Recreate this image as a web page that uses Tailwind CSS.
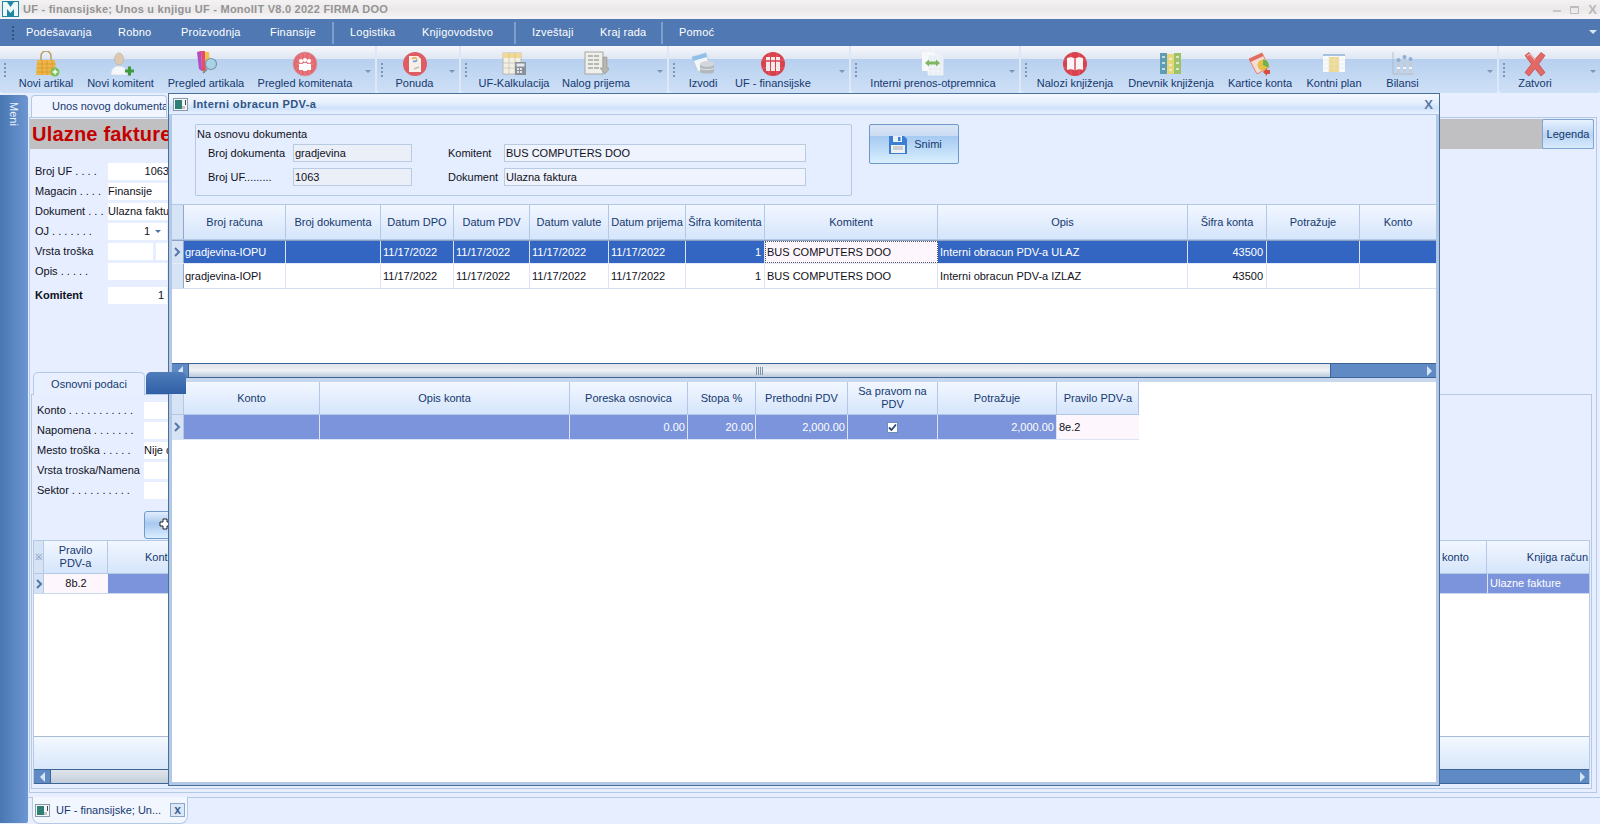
<!DOCTYPE html>
<html><head><meta charset="utf-8"><title>UF - finansijske</title>
<script src="https://cdn.jsdelivr.net/npm/@tailwindcss/browser@4"></script></head>
<body class="m-0 overflow-hidden">
<div class="relative w-[1600px] h-[824px] flex flex-col overflow-hidden bg-[#e6eeff] font-[Liberation_Sans,sans-serif] text-[11px] text-[#10101a]">

<!-- title bar -->
<div class="h-[19px] shrink-0 flex items-center bg-gradient-to-b from-[#f4f2f2] via-[#ece9ea] to-[#f6f5f6]">
  <svg width="17" height="16" viewBox="0 0 17 16" class="ml-[2px] mb-[2px]"><rect width="17" height="16" fill="#1e88a0"/><path d="M1 1h4l3.500 5 3.500-5h4v14h-4V8l-3.500 4L5 8v7H1z" fill="#eef8fa"/></svg>
  <span class="ml-[4px] font-bold text-[11px] tracking-[0.25px] text-[#949494] whitespace-nowrap">UF - finansijske; Unos u knjigu UF - MonolIT V8.0 2022 FIRMA DOO</span>
  <div class="ml-auto mr-[3px] flex items-center gap-[9px] text-[#b8b8b8]">
    <span class="w-[8px] h-[2px] mt-[3px] bg-[#c8c8c8]"></span>
    <span class="w-[9px] h-[8px] border border-[#bdbdbd] border-t-2"></span>
    <span class="font-bold text-[13px] leading-none">X</span>
  </div>
</div>

<!-- menu bar -->
<div class="h-[27px] shrink-0 bg-[#5079b3] flex items-center text-white text-[11px] tracking-[0.2px] relative">
  <div class="w-[26px] flex justify-center"><span class="w-[2px] h-[14px] border-l-2 border-dotted border-[#33527f]"></span></div>
  <span class="w-[92px]">Podešavanja</span>
  <span class="w-[63px]">Robno</span>
  <span class="w-[89px]">Proizvodnja</span>
  <span class="w-[62px]">Finansije</span>
  <span class="w-[2px] h-[22px] bg-[#7d9fce] mr-[16px]"></span>
  <span class="w-[72px]">Logistika</span>
  <span class="w-[92px]">Knjigovodstvo</span>
  <span class="w-[2px] h-[22px] bg-[#7d9fce] mr-[16px]"></span>
  <span class="w-[68px]">Izveštaji</span>
  <span class="w-[61px]">Kraj rada</span>
  <span class="w-[2px] h-[22px] bg-[#7d9fce] mr-[16px]"></span>
  <span>Pomoć</span>
  <span class="absolute right-[3px] top-[11px] w-0 h-0 border-x-[4px] border-x-transparent border-t-[4px] border-t-[#dbe6f5]"></span>
</div>

<!-- toolbar -->
<div class="h-[47px] shrink-0 flex text-[#15386e] leading-[13px] bg-[#e6eeff]">
  <!-- group 1 -->
  <div class="w-[377px] h-[47px] relative flex pl-[15px] rounded-b-[3px] border-r-2 border-[#dce8f8] bg-[linear-gradient(#f6f7fa_0%,#dfe7f3_27%,#b7d0ef_28%,#cee0f6_100%)]">
    <span class="absolute left-[4px] top-[17px] h-[14px] border-l-2 border-dotted border-[#7f95b3]"></span>
    <div class="w-[62px] flex flex-col items-center"><svg width="28" height="26" viewBox="0 0 28 26" class="mt-[5px]"><path d="M9 9V5a5 5 0 0 1 10 0v4" fill="none" stroke="#b89a5e" stroke-width="1.4"/><path d="M5 9h18l1 15H4z" fill="#eeb548"/><path d="M5 13h19M5 17h19M5 21h19M10 9v15M15 9v15M20 9v15" stroke="#d4952c" stroke-width=".7"/><circle cx="23" cy="21" r="4.5" fill="#7cc05a"/><path d="M23 18.500v5M20.500 21h5" stroke="#fff" stroke-width="1.4"/></svg><span class="whitespace-nowrap">Novi artikal</span></div>
    <div class="w-[87px] flex flex-col items-center"><svg width="28" height="26" viewBox="0 0 28 26" class="mt-[5px]"><ellipse cx="12" cy="8" rx="4.500" ry="6" fill="#dcc9b0" stroke="#b5a893" stroke-width=".5"/><path d="M4 24c0-6 3-9 8-9s8 3 8 9z" fill="#f4f6fa" stroke="#cfd6e0" stroke-width=".6"/><path d="M18 20h9M22.500 15.500v9" stroke="#3e9a3c" stroke-width="3"/></svg><span class="whitespace-nowrap">Novi komitent</span></div>
    <div class="w-[84px] flex flex-col items-center"><svg width="28" height="26" viewBox="0 0 28 26" class="mt-[3px]"><path d="M5 3l4-1 1 20-3-2z" fill="#b24bc9"/><path d="M9 2h4l1 20h-4z" fill="#e74d63"/><path d="M13 3h4l1 14h-4z" fill="#f3c04b"/><circle cx="19" cy="15" r="5.500" fill="#a8d3e6" stroke="#7b95a8" stroke-width="1.200"/><path d="M15 20l-4 4" stroke="#8d8d8d" stroke-width="2"/></svg><span class="mt-[2px] whitespace-nowrap">Pregled artikala</span></div>
    <div class="w-[114px] flex flex-col items-center"><svg width="26" height="26" viewBox="0 0 26 26" class="mt-[5px]"><circle cx="13" cy="13" r="12" fill="#e26b73"/><circle cx="13" cy="13" r="12" fill="none" stroke="#d9a2a5" stroke-width=".7"/><path d="M5 9h16M4 13h18M5 17h16M9 3v20M13 2v22M17 3v20" stroke="#ee9a9f" stroke-width=".6"/><circle cx="9" cy="10" r="2" fill="#fff"/><circle cx="17" cy="10" r="2" fill="#fff"/><circle cx="13" cy="9" r="2" fill="#fff"/><path d="M7 13h4v6H7zM15 13h4v6h-4zM11 12h4v8h-4z" fill="#fff"/></svg><span class="whitespace-nowrap">Pregled komitenata</span></div>
    <span class="absolute right-[4px] top-[24px] w-0 h-0 border-x-[3px] border-x-transparent border-t-[3px] border-t-[#7f95b3]"></span>
  </div>
  <!-- group 2 -->
  <div class="w-[84px] h-[47px] relative flex pl-[15px] rounded-b-[3px] border-r-2 border-[#dce8f8] bg-[linear-gradient(#f6f7fa_0%,#dfe7f3_27%,#b7d0ef_28%,#cee0f6_100%)]">
    <span class="absolute left-[4px] top-[17px] h-[14px] border-l-2 border-dotted border-[#7f95b3]"></span>
    <div class="w-[45px] flex flex-col items-center"><svg width="26" height="26" viewBox="0 0 26 26" class="mt-[5px]"><circle cx="13" cy="13" r="12" fill="#de5d65"/><path d="M7 5h9l3 3v13H7z" fill="#f8efe8"/><path d="M10 8a3 3 0 0 1 5 0" fill="none" stroke="#e9a243" stroke-width="1.500"/><path d="M11 10a3 3 0 0 0 4-1" fill="none" stroke="#68a3d9" stroke-width="1.500"/><path d="M12 18l5-2" stroke="#bdbdbd" stroke-width="1.500"/></svg><span class="whitespace-nowrap">Ponuda</span></div>
    <span class="absolute right-[4px] top-[24px] w-0 h-0 border-x-[3px] border-x-transparent border-t-[3px] border-t-[#7f95b3]"></span>
  </div>
  <!-- group 3 -->
  <div class="w-[208px] h-[47px] relative flex pl-[15px] rounded-b-[3px] border-r-2 border-[#dce8f8] bg-[linear-gradient(#f6f7fa_0%,#dfe7f3_27%,#b7d0ef_28%,#cee0f6_100%)]">
    <span class="absolute left-[4px] top-[17px] h-[14px] border-l-2 border-dotted border-[#7f95b3]"></span>
    <div class="w-[76px] flex flex-col items-center"><svg width="28" height="26" viewBox="0 0 28 26" class="mt-[5px]"><rect x="3" y="2" width="18" height="21" fill="#f3efe2" stroke="#a9a9a0" stroke-width=".7"/><rect x="3" y="2" width="18" height="5" fill="#f2d98e"/><path d="M3 12h18M3 17h18M9 2v21M15 2v21" stroke="#c2c0b4" stroke-width=".7"/><rect x="15" y="11" width="11" height="13" fill="#8a9097"/><rect x="16.500" y="12.500" width="8" height="3" fill="#e4eaf0"/><path d="M17 18h2m1 0h2m-5 3h2m1 0h2" stroke="#fff" stroke-width="1.300"/></svg><span class="whitespace-nowrap">UF-Kalkulacija</span></div>
    <div class="w-[88px] flex flex-col items-center"><svg width="26" height="26" viewBox="0 0 26 26" class="mt-[4px]"><rect x="2" y="2" width="18" height="22" fill="#eeeeea" stroke="#9a9a92" stroke-width=".8"/><path d="M5 6h12M5 10h12M5 14h12M5 18h12" stroke="#a6a6a0" stroke-width="1.500" stroke-dasharray="5 1"/><path d="M20 7h4v11h3l-5 6-5-6h3z" fill="#b7b7ad" stroke="#8a8a84" stroke-width=".5"/></svg><span class="mt-[1px] whitespace-nowrap">Nalog prijema</span></div>
    <span class="absolute right-[4px] top-[24px] w-0 h-0 border-x-[3px] border-x-transparent border-t-[3px] border-t-[#7f95b3]"></span>
  </div>
  <!-- group 4 -->
  <div class="w-[182px] h-[47px] relative flex pl-[15px] rounded-b-[3px] border-r-2 border-[#dce8f8] bg-[linear-gradient(#f6f7fa_0%,#dfe7f3_27%,#b7d0ef_28%,#cee0f6_100%)]">
    <span class="absolute left-[4px] top-[17px] h-[14px] border-l-2 border-dotted border-[#7f95b3]"></span>
    <div class="w-[38px] flex flex-col items-center"><svg width="26" height="26" viewBox="0 0 26 26" class="mt-[5px]"><path d="M2 6l14-4 4 14-12 5z" fill="#f2f6fb" stroke="#aebfd4" stroke-width=".6"/><path d="M2 6l14-4 1 4-14 4z" fill="#8fc0ea"/><path d="M10 13v8c0 2 14 2 14 0v-8z" fill="#b3b8bd"/><ellipse cx="17" cy="13" rx="7" ry="3" fill="#d3d7db"/><path d="M10 17c0 2 14 2 14 0" fill="none" stroke="#e5e8eb"/></svg><span class="whitespace-nowrap">Izvodi</span></div>
    <div class="w-[102px] flex flex-col items-center"><svg width="26" height="26" viewBox="0 0 26 26" class="mt-[5px]"><circle cx="13" cy="13" r="12" fill="#d9414c"/><path d="M2 9h22M2 17h22M9 2v22M17 2v22" stroke="#e87b82" stroke-width=".6"/><path d="M6 6h4v14H6zM11 6h4v14h-4zM16 6h4v14h-4z" fill="#f4eaea"/><path d="M6 10h14" stroke="#d9414c" stroke-width="1.500"/></svg><span class="whitespace-nowrap">UF - finansijske</span></div>
    <span class="absolute right-[4px] top-[24px] w-0 h-0 border-x-[3px] border-x-transparent border-t-[3px] border-t-[#7f95b3]"></span>
  </div>
  <!-- group 5 -->
  <div class="w-[170px] h-[47px] relative flex pl-[15px] rounded-b-[3px] border-r-2 border-[#dce8f8] bg-[linear-gradient(#f6f7fa_0%,#dfe7f3_27%,#b7d0ef_28%,#cee0f6_100%)]">
    <span class="absolute left-[4px] top-[17px] h-[14px] border-l-2 border-dotted border-[#7f95b3]"></span>
    <div class="w-[134px] flex flex-col items-center"><svg width="26" height="26" viewBox="0 0 26 26" class="mt-[5px]"><path d="M2 1h12l2 3v16H2z" fill="#f6f8fb"/><path d="M8 4h12l3 3v17H8z" fill="#e9eef4" stroke="#f8fafc" stroke-width=".7"/><path d="M8 20h15M8 16h15M13 4v20M18 4v20" stroke="#f8fafc" stroke-width=".6"/><path d="M5 12l4-3.500v2h7v-2l4 3.500-4 3.500v-2H9v2z" fill="#7fb663"/></svg><span class="whitespace-nowrap">Interni prenos-otpremnica</span></div>
    <span class="absolute right-[4px] top-[24px] w-0 h-0 border-x-[3px] border-x-transparent border-t-[3px] border-t-[#7f95b3]"></span>
  </div>
  <!-- group 6 -->
  <div class="w-[478px] h-[47px] relative flex pl-[15px] rounded-b-[3px] border-r-2 border-[#dce8f8] bg-[linear-gradient(#f6f7fa_0%,#dfe7f3_27%,#b7d0ef_28%,#cee0f6_100%)]">
    <span class="absolute left-[4px] top-[17px] h-[14px] border-l-2 border-dotted border-[#7f95b3]"></span>
    <div class="w-[78px] flex flex-col items-center"><svg width="26" height="26" viewBox="0 0 26 26" class="mt-[5px]"><circle cx="13" cy="13" r="12" fill="#d9414c"/><path d="M2 9h22M2 17h22M9 2v22M17 2v22" stroke="#e87b82" stroke-width=".6"/><path d="M5 7c3-1 6-1 8 1 2-2 5-2 8-1v12c-3-1-6-1-8 1-2-2-5-2-8-1z" fill="#fbf4f4"/><path d="M13 8v12" stroke="#d9414c" stroke-width="1.400"/></svg><span class="whitespace-nowrap">Nalozi knjiženja</span></div>
    <div class="w-[114px] flex flex-col items-center"><svg width="26" height="26" viewBox="0 0 26 26" class="mt-[5px]"><rect x="2" y="2" width="7" height="21" fill="#5d9db5"/><rect x="9" y="3" width="7" height="20" fill="#e6d677"/><rect x="16" y="2" width="7" height="21" fill="#9cc26a"/><path d="M4 6h3M4 12h3M4 18h3M11 8h3M11 14h3M11 19h3M18 6h3M18 12h3M18 18h3" stroke="#eef2e8" stroke-width="1.600"/></svg><span class="whitespace-nowrap">Dnevnik knjiženja</span></div>
    <div class="w-[64px] flex flex-col items-center"><svg width="26" height="26" viewBox="0 0 26 26" class="mt-[5px]"><path d="M2 8l13-6 7 14-12 7z" fill="#f6dcd5" stroke="#e26d5a" stroke-width=".8"/><path d="M2 8l13-6 1.500 3-13 6z" fill="#df6e5e"/><circle cx="16" cy="14" r="5.500" fill="#e7c04a"/><path d="M16 8.500a5.500 5.500 0 0 1 5 8l-5-2.500z" fill="#6fb34c"/><path d="M16 21l4-4v2h3v4h-3v2z" fill="#d84f3f"/></svg><span class="whitespace-nowrap">Kartice konta</span></div>
    <div class="w-[84px] flex flex-col items-center"><svg width="26" height="26" viewBox="0 0 26 26" class="mt-[5px]"><rect x="2" y="3" width="22" height="18" fill="#f8fafc"/><rect x="2" y="3" width="22" height="2" fill="#a6c1de"/><rect x="8" y="6" width="10" height="15" fill="#f0d88a"/><path d="M2 9h22M2 13h22M2 17h22M8 5v16M13 5v16M18 5v16" stroke="#e3e6e2" stroke-width=".6"/></svg><span class="whitespace-nowrap">Kontni plan</span></div>
    <div class="w-[53px] flex flex-col items-center"><svg width="26" height="26" viewBox="0 0 26 26" class="mt-[5px]"><path d="M3 1v22h21" fill="none" stroke="#aab4c0" stroke-width=".8"/><path d="M7 10h3v13H7zM13 7h3v16h-3zM19 9h3v14h-3z" fill="#c4ccd6"/><circle cx="8.500" cy="9" r="2" fill="#8fb0d6"/><circle cx="14.500" cy="6" r="2" fill="#8fb0d6"/><circle cx="20.500" cy="8" r="2" fill="#8fb0d6"/><path d="M7 17h3M13 17h3M19 17h3" stroke="#f3f5f7" stroke-width="2"/></svg><span class="whitespace-nowrap">Bilansi</span></div>
    <span class="absolute right-[4px] top-[24px] w-0 h-0 border-x-[3px] border-x-transparent border-t-[3px] border-t-[#7f95b3]"></span>
  </div>
  <!-- group 7 -->
  <div class="w-[101px] h-[47px] relative flex pl-[15px] rounded-b-[3px] bg-[linear-gradient(#f6f7fa_0%,#dfe7f3_27%,#b7d0ef_28%,#cee0f6_100%)]">
    <span class="absolute left-[4px] top-[17px] h-[14px] border-l-2 border-dotted border-[#7f95b3]"></span>
    <div class="w-[42px] flex flex-col items-center"><svg width="26" height="26" viewBox="0 0 26 26" class="mt-[5px]"><path d="M3 4.500l4-3 6 7 6-7 4 3-6.500 8.500 6.500 8.500-4 3.500-6-7.500-6 7.500-4-3.500 6.500-8.500z" fill="#e26a66" stroke="#c94a48" stroke-width=".8"/><path d="M5 5l3-2 5 6" fill="none" stroke="#f4b3ad" stroke-width="1.200"/></svg><span class="whitespace-nowrap">Zatvori</span></div>
    <span class="absolute right-[4px] top-[24px] w-0 h-0 border-x-[3px] border-x-transparent border-t-[3px] border-t-[#7f95b3]"></span>
  </div>
</div>

<!-- main -->
<div class="flex-1 flex min-h-0 pt-[2px]">
  <!-- Meni sidebar -->
  <div class="w-[28px] shrink-0 mb-[1px] rounded-tr-[4px] rounded-br-[2px] bg-gradient-to-r from-[#4877b2] to-[#6d96d2] text-[#eaf2fd] flex justify-center">
    <span class="[writing-mode:vertical-rl] mt-[7px]">Meni</span>
  </div>
  <div class="flex-1 flex flex-col min-w-0">
    <!-- doc tab -->
    <div class="h-[22px] shrink-0 flex pl-[3px]">
      <div class="w-[136px] h-[22px] rounded-t-[4px] border border-b-0 border-[#b4c9e6] bg-[#f0f5ff] pl-[20px] pt-[2px] text-[#15386e] whitespace-nowrap overflow-hidden">Unos novog dokumenta</div>
    </div>
    <!-- doc panel -->
    <div class="flex-1 min-h-0 mr-[3px] ml-[1px] mb-[4px] border border-[#b4c9e6] pt-[1px] pr-[2px] pb-[3px] flex flex-col">
      <div class="h-[30px] shrink-0 bg-[#c0bfc1] flex justify-between items-center pl-[2px]">
        <span class="text-[20px] leading-none font-bold tracking-[0.2px] text-[#c40000] whitespace-nowrap">Ulazne fakture</span>
        <div class="w-[52px] h-[30px] rounded-[2px] border border-[#7fa5d4] bg-[linear-gradient(#e8f2ff,#b9d4f3_55%,#d9ecff)] text-[#15386e] flex items-center justify-center">Legenda</div>
      </div>
      <!-- header form -->
      <div class="h-[223px] shrink-0 pl-[5px] pt-[14px] flex flex-col">
        <div class="h-[20px] shrink-0 flex"><span class="w-[73px] whitespace-nowrap">Broj UF . . . .</span><span class="w-[61px] h-[17px] bg-white text-right">1063</span></div>
        <div class="h-[20px] shrink-0 flex"><span class="w-[73px] whitespace-nowrap">Magacin . . . .</span><span class="w-[61px] h-[17px] bg-white whitespace-nowrap">Finansije</span></div>
        <div class="h-[20px] shrink-0 flex"><span class="w-[73px] whitespace-nowrap">Dokument . . .</span><span class="w-[61px] h-[17px] bg-white whitespace-nowrap">Ulazna faktura</span></div>
        <div class="h-[20px] shrink-0 flex"><span class="w-[73px] whitespace-nowrap">OJ . . . . . . .</span><span class="w-[59px] h-[17px] bg-white flex justify-end items-center gap-[5px] pr-[6px]">1<span class="w-0 h-0 border-x-[3px] border-x-transparent border-t-[3px] border-t-[#4d74a8]"></span></span></div>
        <div class="h-[20px] shrink-0 flex"><span class="w-[73px] whitespace-nowrap">Vrsta troška</span><span class="w-[45px] h-[17px] bg-white"></span><span class="w-[15px] h-[17px] ml-[3px] bg-white"></span></div>
        <div class="h-[24px] shrink-0 flex"><span class="w-[73px] whitespace-nowrap">Opis . . . . .</span><span class="w-[59px] h-[17px] bg-white"></span></div>
        <div class="h-[20px] shrink-0 flex"><span class="w-[73px] font-bold">Komitent</span><span class="w-[59px] h-[17px] bg-white text-right pr-[3px]">1</span></div>
      </div>
      <!-- tabs -->
      <div class="h-[22px] shrink-0 flex pl-[3px] relative z-10">
        <div class="w-[112px] h-[23px] rounded-t-[5px] border border-b-0 border-[#b4c9e6] bg-[#e8f0ff] text-center pt-[3px] text-[#15386e]">Osnovni podaci</div>
        <div class="w-[40px] h-[22px] ml-[1px] rounded-t-[5px] bg-gradient-to-b from-[#4f7dbb] to-[#2f5fa6]"></div>
      </div>
      <div class="flex-1 min-h-0 ml-[1px] mr-[2px] border border-[#b4c9e6] flex flex-col">
        <div class="h-[145px] shrink-0 pl-[5px] pt-[7px] flex flex-col">
          <div class="h-[20px] shrink-0 flex"><span class="w-[107px] whitespace-nowrap">Konto . . . . . . . . . . .</span><span class="w-[40px] h-[17px] bg-white"></span></div>
          <div class="h-[20px] shrink-0 flex"><span class="w-[107px] whitespace-nowrap">Napomena . . . . . . .</span><span class="w-[40px] h-[17px] bg-white"></span></div>
          <div class="h-[20px] shrink-0 flex"><span class="w-[107px] whitespace-nowrap">Mesto troška . . . . .</span><span class="w-[40px] h-[17px] bg-white whitespace-nowrap">Nije definisano</span></div>
          <div class="h-[20px] shrink-0 flex"><span class="w-[107px] whitespace-nowrap">Vrsta troska/Namena</span><span class="w-[40px] h-[17px] bg-white"></span></div>
          <div class="h-[29px] shrink-0 flex"><span class="w-[107px] whitespace-nowrap">Sektor . . . . . . . . . .</span><span class="w-[40px] h-[17px] bg-white"></span></div>
          <div class="ml-[107px] w-[60px] h-[28px] shrink-0 rounded-[3px] border border-[#6f9bd0] bg-[linear-gradient(#e2eefc,#a9c8ee_45%,#dbeeff)] pl-[14px] pt-[6px]"><svg width="12" height="12" viewBox="0 0 12 12"><path d="M4 1h4v3h3v4H8v3H4V8H1V4h3z" fill="#fff" stroke="#222" stroke-width="1"/></svg></div>
        </div>
        <!-- lower grid -->
        <div class="flex-1 min-h-0 mx-[1px] mb-[4px] bg-white flex flex-col border-x border-[#b4c9e6]">
          <div class="h-[34px] shrink-0 flex text-[#15386e] bg-gradient-to-b from-[#f2f7ff] to-[#d5e5fb] border-y border-[#b4c9e6]">
            <div class="w-[10px] border-r border-[#b4c9e6] bg-[#d6e3f5] text-[#6f8fb8] text-center leading-[32px] text-[9px]">※</div>
            <div class="w-[64px] border-r border-[#b4c9e6] flex items-center justify-center text-center leading-[13px]">Pravilo<br>PDV-a</div>
            <div class="flex-1 flex items-center pl-[37px]">Konto</div>
            <div class="w-[48px] border-r border-[#b4c9e6] flex items-center pl-[3px]">konto</div>
            <div class="w-[102px] flex items-center justify-end pr-[1px]">Knjiga račun</div>
          </div>
          <div class="h-[20px] shrink-0 flex border-b border-[#c8d7ec]">
            <div class="w-[10px] border-r border-[#b4c9e6] bg-[#d6e3f5] flex items-center justify-center"><svg width="6" height="10" viewBox="0 0 6 10"><path d="M1 1l4 4-4 4" fill="none" stroke="#5479a8" stroke-width="2"/></svg></div>
            <div class="w-[64px] bg-[#fdf6fd] flex items-center justify-center">8b.2</div>
            <div class="flex-1 bg-[#7b94dc]"></div>
            <div class="w-[102px] bg-[#7b94dc] border-l border-[#dbe4f4] text-white flex items-center pl-[2px]">Ulazne fakture</div>
          </div>
          <div class="flex-1"></div>
          <div class="h-[33px] shrink-0 border-t border-[#a9bcd4] bg-gradient-to-b from-[#f3f8ff] to-[#d8e7fb]"></div>
          <div class="h-[15px] shrink-0 border-y border-[#3d6497] flex bg-gradient-to-b from-[#dfe4ea] to-[#c3cedb]">
            <div class="w-[17px] border-r border-[#3d6497] bg-[#5f8ac4] flex items-center justify-center"><span class="w-0 h-0 border-y-[5px] border-y-transparent border-r-[5px] border-r-[#d6e5f6]"></span></div>
            <div class="flex-1"></div>
            <div class="w-[160px] bg-[#5f8ac4] flex items-center justify-end pr-[4px]"><span class="w-0 h-0 border-y-[5px] border-y-transparent border-l-[5px] border-l-[#d6e5f6]"></span></div>
          </div>
        </div>
      </div>
    </div>
    <!-- window tab bar -->
    <div class="h-[27px] shrink-0 flex pl-[4px] border-t border-[#b4c9e6]">
      <div class="w-[156px] h-[27px] -mt-[1px] rounded-b-[8px] border-x border-b border-[#b4c9e6] bg-[#f1f6ff] flex items-center pl-[2px] text-[#15386e]">
        <svg width="15" height="13" viewBox="0 0 15 13" class="shrink-0"><rect x=".5" y=".5" width="14" height="12" fill="#f4f6f8" stroke="#8a99aa"/><rect x="2" y="2" width="7" height="9" fill="#2f7f75"/><rect x="9" y="8" width="3" height="3" fill="#c5c5c5"/><rect x="12" y="2" width="1" height="5" fill="#444"/></svg>
        <span class="ml-[6px] w-[112px] whitespace-nowrap">UF - finansijske; Un...</span>
        <span class="ml-[2px] w-[15px] h-[14px] border border-[#8ca6c8] bg-[#dce8f8] flex items-center justify-center font-bold text-[#3c618f] text-[12px] leading-none">x</span>
      </div>
    </div>
  </div>
</div>

<!-- modal -->
<div class="absolute left-[168px] top-[93px] w-[1272px] h-[693px] border border-[#4a7098] bg-[#e5eeff] flex flex-col">
  <div class="h-[21px] shrink-0 flex items-center bg-[linear-gradient(#f4f8ff,#e9f1fe_40%,#cfe2fb_70%,#e8f1ff)] pl-[4px] pr-[6px] border-b border-[#b2c8e6]">
    <svg width="15" height="13" viewBox="0 0 15 13"><rect x=".5" y=".5" width="14" height="12" fill="#f4f6f8" stroke="#8a99aa"/><rect x="2" y="2" width="7" height="9" fill="#2f7f75"/><rect x="9" y="8" width="3" height="3" fill="#c5c5c5"/><rect x="12" y="2" width="1" height="5" fill="#444"/></svg>
    <span class="ml-[5px] font-bold text-[#2f5585] text-[11px] tracking-[0.4px]">Interni obracun PDV-a</span>
    <span class="ml-auto text-[#5a7ba6] font-bold text-[13px] leading-none">X</span>
  </div>
  <div class="flex-1 min-h-0 flex flex-col border-x-[3px] border-b-[3px] border-[#b2c8e6] bg-[#e5eeff]">
    <!-- top form -->
    <div class="h-[90px] shrink-0 pl-[23px] pt-[9px] flex gap-[17px] border-b border-[#b2c8e6]">
      <div class="w-[657px] h-[72px] rounded-[2px] border border-[#b2c8e6] pl-[1px] pt-[2px] flex flex-col">
        <span class="h-[17px] leading-[14px]">Na osnovu dokumenta</span>
        <div class="flex pl-[11px] h-[24px]">
          <span class="w-[85px] pt-[1px] whitespace-nowrap">Broj dokumenta</span>
          <span class="w-[119px] h-[18px] border border-[#b9cbe3] bg-[#eaeff8] pl-[1px]">gradjevina</span>
          <span class="ml-[36px] w-[56px] pt-[1px]">Komitent</span>
          <span class="w-[302px] h-[18px] border border-[#b9cbe3] bg-[#eef3fd] pl-[1px]">BUS COMPUTERS DOO</span>
        </div>
        <div class="flex pl-[11px] h-[24px]">
          <span class="w-[85px] pt-[1px] whitespace-nowrap">Broj UF.........</span>
          <span class="w-[119px] h-[18px] border border-[#b9cbe3] bg-[#eaeff8] pl-[1px]">1063</span>
          <span class="ml-[36px] w-[56px] pt-[1px]">Dokument</span>
          <span class="w-[302px] h-[18px] border border-[#b9cbe3] bg-[#eef3fd] pl-[1px]">Ulazna faktura</span>
        </div>
      </div>
      <div class="w-[90px] h-[40px] rounded-[2px] border border-[#6f97c8] bg-[linear-gradient(#d9e6f6,#cbdcf2_28%,#a6caf1_30%,#d8efff)] flex items-center justify-center gap-[7px] pl-[3px] text-[#15386e]">
        <svg width="18" height="19" viewBox="0 0 18 19"><path d="M0 1h15l3 3v15H0z" fill="#3a7fd3"/><rect x="4" y="1" width="9" height="6" fill="#e8f0f8"/><rect x="9" y="2" width="2.500" height="4" fill="#3a7fd3"/><rect x="2" y="10" width="14" height="8" fill="#eef0f2"/><path d="M4 12h10M4 14h10" stroke="#a8aeb4"/></svg>
        <span>Snimi</span>
      </div>
    </div>
    <!-- upper grid -->
    <div class="h-[158px] shrink-0 bg-white flex flex-col">
      <div class="h-[35px] shrink-0 grid grid-cols-[12px_102px_95px_73px_76px_79px_77px_79px_173px_250px_79px_93px_76px] text-[#15386e] bg-gradient-to-b from-[#f2f7ff] to-[#d5e5fb] border-b border-[#b2c8e6]">
        <div class="bg-[#d6e3f5] border-r border-[#8fa9ce]"></div>
        <div class="border-r border-[#b2c8e6] flex items-center justify-center whitespace-nowrap">Broj računa</div>
        <div class="border-r border-[#b2c8e6] flex items-center justify-center whitespace-nowrap">Broj dokumenta</div>
        <div class="border-r border-[#b2c8e6] flex items-center justify-center whitespace-nowrap">Datum DPO</div>
        <div class="border-r border-[#b2c8e6] flex items-center justify-center whitespace-nowrap">Datum PDV</div>
        <div class="border-r border-[#b2c8e6] flex items-center justify-center whitespace-nowrap">Datum valute</div>
        <div class="border-r border-[#b2c8e6] flex items-center justify-center whitespace-nowrap">Datum prijema</div>
        <div class="border-r border-[#b2c8e6] flex items-center justify-center whitespace-nowrap">Šifra komitenta</div>
        <div class="border-r border-[#b2c8e6] flex items-center justify-center whitespace-nowrap">Komitent</div>
        <div class="border-r border-[#b2c8e6] flex items-center justify-center whitespace-nowrap">Opis</div>
        <div class="border-r border-[#b2c8e6] flex items-center justify-center whitespace-nowrap">Šifra konta</div>
        <div class="border-r border-[#b2c8e6] flex items-center justify-center whitespace-nowrap">Potražuje</div>
        <div class="flex items-center justify-center whitespace-nowrap">Konto</div>
      </div>
      <div class="h-[24px] shrink-0 grid grid-cols-[12px_102px_95px_73px_76px_79px_77px_79px_173px_250px_79px_93px_76px] bg-[#3366c2] text-white border-b border-[#e4ebf7] border-t border-t-[#8aa0c4]">
        <div class="bg-[#d6e3f5] border-r border-[#8fa9ce] flex items-center justify-center"><svg width="7" height="10" viewBox="0 0 7 10"><path d="M1 1l4 4-4 4" fill="none" stroke="#5479a8" stroke-width="2"/></svg></div>
        <div class="border-r border-[#dbe4f4] flex items-center pl-[1px] whitespace-nowrap">gradjevina-IOPU</div>
        <div class="border-r border-[#dbe4f4]"></div>
        <div class="border-r border-[#dbe4f4] flex items-center pl-[2px]">11/17/2022</div>
        <div class="border-r border-[#dbe4f4] flex items-center pl-[2px]">11/17/2022</div>
        <div class="border-r border-[#dbe4f4] flex items-center pl-[2px]">11/17/2022</div>
        <div class="border-r border-[#dbe4f4] flex items-center pl-[2px]">11/17/2022</div>
        <div class="border-r border-[#dbe4f4] flex items-center justify-end pr-[3px]">1</div>
        <div class="bg-[#fdf6fd] text-[#10101a] border border-dotted border-[#555] flex items-center pl-[1px] whitespace-nowrap">BUS COMPUTERS DOO</div>
        <div class="border-r border-[#dbe4f4] flex items-center pl-[2px] whitespace-nowrap">Interni obracun PDV-a ULAZ</div>
        <div class="border-r border-[#dbe4f4] flex items-center justify-end pr-[3px]">43500</div>
        <div class="border-r border-[#dbe4f4]"></div>
        <div></div>
      </div>
      <div class="h-[25px] shrink-0 grid grid-cols-[12px_102px_95px_73px_76px_79px_77px_79px_173px_250px_79px_93px_76px] border-b border-[#d5dfef]">
        <div class="bg-[#d6e3f5] border-r border-[#8fa9ce]"></div>
        <div class="border-r border-[#dbe4f4] flex items-center pl-[1px] whitespace-nowrap">gradjevina-IOPI</div>
        <div class="border-r border-[#dbe4f4]"></div>
        <div class="border-r border-[#dbe4f4] flex items-center pl-[2px]">11/17/2022</div>
        <div class="border-r border-[#dbe4f4] flex items-center pl-[2px]">11/17/2022</div>
        <div class="border-r border-[#dbe4f4] flex items-center pl-[2px]">11/17/2022</div>
        <div class="border-r border-[#dbe4f4] flex items-center pl-[2px]">11/17/2022</div>
        <div class="border-r border-[#dbe4f4] flex items-center justify-end pr-[3px]">1</div>
        <div class="border-r border-[#dbe4f4] flex items-center pl-[2px] whitespace-nowrap">BUS COMPUTERS DOO</div>
        <div class="border-r border-[#dbe4f4] flex items-center pl-[2px] whitespace-nowrap">Interni obracun PDV-a IZLAZ</div>
        <div class="border-r border-[#dbe4f4] flex items-center justify-end pr-[3px]">43500</div>
        <div class="border-r border-[#dbe4f4]"></div>
        <div></div>
      </div>
    </div>
    <!-- scrollbar -->
    <div class="h-[15px] shrink-0 border-y border-[#3d6497] flex bg-gradient-to-b from-[#dfe4ea] via-[#eef1f5] to-[#bccada]">
      <div class="w-[17px] border-r border-[#3d6497] bg-[#5f8ac4] flex items-center justify-center"><span class="w-0 h-0 border-y-[5px] border-y-transparent border-r-[5px] border-r-[#d6e5f6]"></span></div>
      <div class="flex-1 flex items-center justify-center gap-[1px]"><span class="w-[1px] h-[8px] bg-[#7f93ab]"></span><span class="w-[1px] h-[8px] bg-[#7f93ab]"></span><span class="w-[1px] h-[8px] bg-[#7f93ab]"></span><span class="w-[1px] h-[8px] bg-[#7f93ab]"></span></div>
      <div class="w-[106px] border-l border-[#3d6497] bg-[#5f8ac4] flex items-center justify-end pr-[4px]"><span class="w-0 h-0 border-y-[5px] border-y-transparent border-l-[5px] border-l-[#d6e5f6]"></span></div>
    </div>
    <div class="h-[4px] shrink-0 bg-[#c6d7ee]"></div>
    <!-- lower modal grid -->
    <div class="flex-1 min-h-0 bg-white flex flex-col">
      <div class="h-[33px] shrink-0 w-[967px] grid grid-cols-[12px_136px_250px_118px_68px_92px_90px_119px_82px] text-[#15386e] bg-gradient-to-b from-[#f2f7ff] to-[#d5e5fb] border-b border-r border-[#b2c8e6]">
        <div class="bg-[#d6e3f5] border-r border-[#b2c8e6]"></div>
        <div class="border-r border-[#b2c8e6] flex items-center justify-center">Konto</div>
        <div class="border-r border-[#b2c8e6] flex items-center justify-center">Opis konta</div>
        <div class="border-r border-[#b2c8e6] flex items-center justify-center">Poreska osnovica</div>
        <div class="border-r border-[#b2c8e6] flex items-center justify-center">Stopa %</div>
        <div class="border-r border-[#b2c8e6] flex items-center justify-center">Prethodni PDV</div>
        <div class="border-r border-[#b2c8e6] flex items-center justify-center text-center leading-[13px]">Sa pravom na<br>PDV</div>
        <div class="border-r border-[#b2c8e6] flex items-center justify-center">Potražuje</div>
        <div class="flex items-center justify-center">Pravilo PDV-a</div>
      </div>
      <div class="h-[25px] shrink-0 w-[967px] grid grid-cols-[12px_136px_250px_118px_68px_92px_90px_119px_82px] bg-[#7b94dc] text-white border-b border-r border-[#dbe4f4]">
        <div class="bg-[#d6e3f5] border-r border-[#b2c8e6] flex items-center justify-center"><svg width="7" height="10" viewBox="0 0 7 10"><path d="M1 1l4 4-4 4" fill="none" stroke="#5479a8" stroke-width="2"/></svg></div>
        <div class="border-r border-[#dbe4f4]"></div>
        <div class="border-r border-[#dbe4f4]"></div>
        <div class="border-r border-[#dbe4f4] flex items-center justify-end pr-[2px]">0.00</div>
        <div class="border-r border-[#dbe4f4] flex items-center justify-end pr-[2px]">20.00</div>
        <div class="border-r border-[#dbe4f4] flex items-center justify-end pr-[2px]">2,000.00</div>
        <div class="border-r border-[#dbe4f4] flex items-center justify-center"><span class="w-[11px] h-[11px] bg-white border border-[#6f8fb8] flex items-center justify-center"><svg width="9" height="9" viewBox="0 0 9 9"><path d="M1 4.500l2.500 2.500L8 1.500" fill="none" stroke="#24457a" stroke-width="1.800"/></svg></span></div>
        <div class="border-r border-[#dbe4f4] flex items-center justify-end pr-[2px]">2,000.00</div>
        <div class="bg-[#fdf6fd] text-[#10101a] flex items-center pl-[2px]">8e.2</div>
      </div>
    </div>
  </div>
</div>
</div>
</body></html>
